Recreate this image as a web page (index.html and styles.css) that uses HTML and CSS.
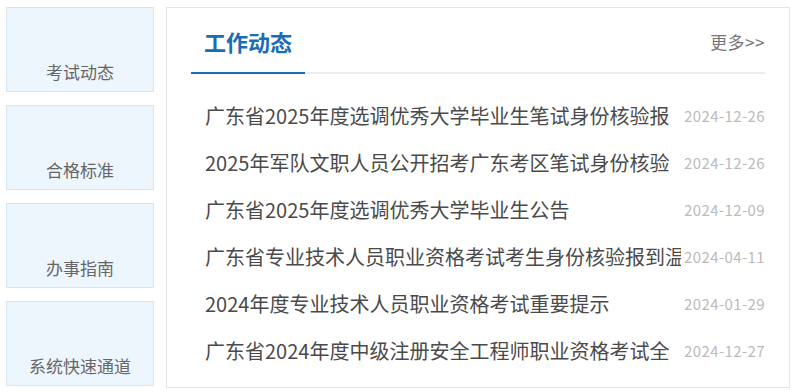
FILE: index.html
```html
<!DOCTYPE html>
<html lang="zh-CN">
<head>
    <meta charset="UTF-8">
    <title>工作动态</title>
    <link rel="stylesheet" href="styles.css">
</head>
<body>

    <div class="wrap">
        <div class="side">
            <a class="side-item" href="#">考试动态</a>
            <a class="side-item" href="#">合格标准</a>
            <a class="side-item" href="#">办事指南</a>
            <a class="side-item" href="#">系统快速通道</a>
        </div>
        <div class="news">
            <div class="news-hd">
                <span class="news-title">工作动态</span>
                <a class="more" href="#">更多&gt;&gt;</a>
            </div>
            <ul class="news-list">
                <li><a href="#">广东省2025年度选调优秀大学毕业生笔试身份核验报</a><span class="date">2024-12-26</span></li>
                <li><a href="#">2025年军队文职人员公开招考广东考区笔试身份核验</a><span class="date">2024-12-26</span></li>
                <li><a href="#">广东省2025年度选调优秀大学毕业生公告</a><span class="date">2024-12-09</span></li>
                <li><a href="#">广东省专业技术人员职业资格考试考生身份核验报到温</a><span class="date">2024-04-11</span></li>
                <li><a href="#">2024年度专业技术人员职业资格考试重要提示</a><span class="date">2024-01-29</span></li>
                <li><a href="#">广东省2024年度中级注册安全工程师职业资格考试全</a><span class="date">2024-12-27</span></li>
            </ul>
        </div>
    </div>

</body>
</html>
```

FILE: styles.css
```css
*{
    margin: 0;
    padding: 0;
    box-sizing: border-box;
}

body{
    background: #fff;
    font-family: "Noto Sans CJK SC", "Noto Sans", sans-serif;
}

ul{
    list-style: none;
}

a{
    text-decoration: none;
}

.wrap{
    display: flex;
    gap: 12px;
    padding: 7px 0 0 6px;
}

.side{
    display: flex;
    flex-direction: column;
    gap: 13px;
    width: 148px;
}

.side-item{
    display: flex;
    align-items: flex-end;
    justify-content: center;
    height: 85px;
    padding-bottom: 7px;
    background: #eef6fd;
    border: 1px solid #d6e6f3;
    color: #666;
    font-size: 17px;
    line-height: 24px;
}

.news{
    width: 624px;
    height: 381px;
    background: #fff;
    border: 1px solid #e6e6e6;
}

.news-hd{
    display: flex;
    justify-content: space-between;
    align-items: center;
    margin: 0 24px;
    border-bottom: 2px solid #ececec;
}

.news-title{
    height: 66px;
    margin-bottom: -2px;
    padding: 0 13px;
    border-bottom: 2px solid #1a6db5;
    line-height: 66px;
    color: #1a6db5;
    font-size: 22px;
    font-weight: bold;
}

.more{
    margin-top: 2px;
    color: #777;
    font-size: 17px;
    letter-spacing: 0.5px;
}

.news-list{
    padding: 18px 24px 0 38px;
}

.news-list li{
    display: grid;
    grid-template-columns: 1fr 84px;
    height: 47px;
    line-height: 47px;
}

.news-list li a{
    overflow: hidden;
    white-space: nowrap;
    color: #4a4a4a;
    font-size: 20px;
}

.news-list .date{
    text-align: right;
    color: #bbb;
    font-size: 15px;
    letter-spacing: 0.4px;
}
```
